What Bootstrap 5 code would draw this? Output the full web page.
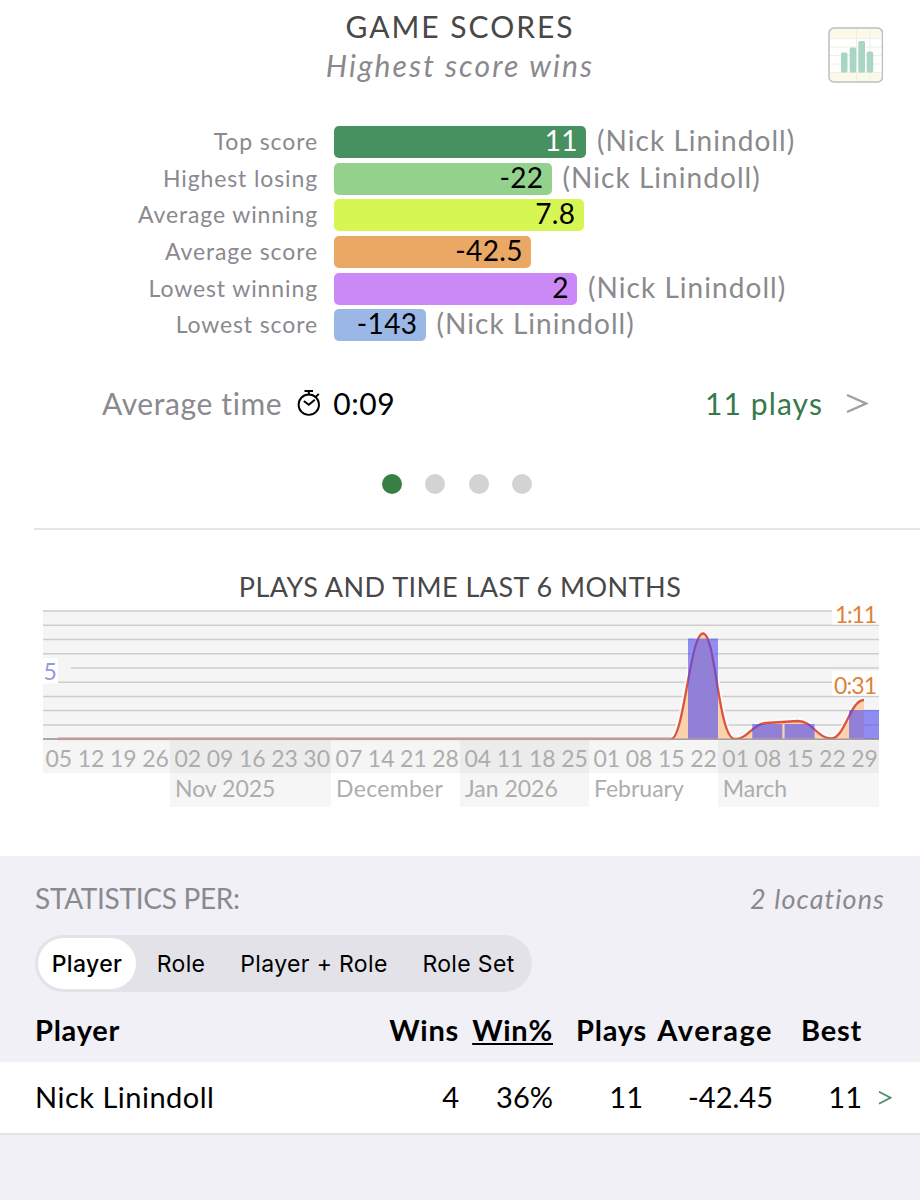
<!DOCTYPE html>
<html lang="en">
<head>
<meta charset="utf-8">
<meta name="viewport" content="width=device-width, initial-scale=1">
<title>Game scores</title>
<link href="https://cdn.jsdelivr.net/npm/bootstrap@5.3.0/dist/css/bootstrap.min.css" rel="stylesheet">
<style>
body{font-family:Lato,"Liberation Sans",sans-serif;background:#f1f0f6;color:#000;font-variant-ligatures:none}
.muted{color:#8a898e}
.head{padding-top:6px}
.t1{font-size:30px;line-height:40px;letter-spacing:2px;color:#484848}
.t2{font-size:30px;line-height:38px;letter-spacing:2.1px;font-style:italic}
.chart-btn{right:37px;top:27px;width:55px;height:56px}
.scores{margin-top:42px;row-gap:4.65px}
.score{height:32px}
.lab{width:318px;margin-right:16px;font-size:23px;letter-spacing:.88px;line-height:31px;height:32px;text-align:right}
.bar{height:32px;border-radius:5px;font-size:28px;letter-spacing:.4px;line-height:29px;text-align:right;padding-right:8px}
.who{font-size:28px;letter-spacing:1.05px;line-height:29px;height:32px;margin-left:11px}
.avg{height:40px;margin-top:42px;padding:0 52px 0 102px;line-height:40px;font-size:30px;letter-spacing:.6px}
.avg>*{flex-shrink:0}
.green{color:#37794a;letter-spacing:1.1px}
.dots{margin:51px 0 34px -6px;gap:23.5px}
.dots i{width:20px;height:20px;border-radius:50%;background:#d3d3d3}
.dots i.on{background:#387f46}
.rule{height:2px;margin-left:34px;background:#e5e5e7}
.t3{margin-top:36px;font-size:27px;letter-spacing:.45px;line-height:41px;height:40px;color:#484848}
.plot{margin:-1px 0 0 43px;width:836px;height:135px;overflow:visible}
.months{margin:0 41px;font-size:23px;color:#adadad;height:67px;clip-path:inset(0 0 0 2px)}
.wk{height:33px;line-height:37px;padding-left:4.500px;background:#f5f5f5}
.mo{height:34px;line-height:30px;padding-left:5px;white-space:nowrap}
.alt .wk{background:#ececec}
.alt .mo{background:#f6f6f6}
.wide{letter-spacing:.3px}
.stats{margin-top:49px;background:#f1f0f6}
.sh{height:79px;padding:0 35px;line-height:85px}
.sh span{font-size:28px;letter-spacing:-.3px}
.sh em{font-size:27px;letter-spacing:1.1px}
.seg{margin-left:35px;width:497px;height:57px;border-radius:29px;background:#e3e2e8;padding:3px;font:400 23px/53px Inter,sans-serif;letter-spacing:.35px}
.seg span{text-align:center;flex-shrink:0}
.seg .on{background:#fff;border-radius:26px;font-weight:500;line-height:52px}
.cols{grid-template-columns:318px 106px 94px 94px 126px 89px 1fr;padding-left:35px;font-size:29px;text-align:right}
.th{height:70px;line-height:75px;font-weight:700;letter-spacing:.75px}
.tr{height:71px;line-height:70px;background:#fff}
.end{height:2px;background:#e3e2e8}
.cols>:first-child{text-align:left}
</style>
</head>
<body>
<main class="bg-white">
<header class="head position-relative text-center">
<div class="t1">GAME SCORES</div>
<div class="t2 muted">Highest score wins</div>
<svg class="chart-btn position-absolute" viewBox="828 27 55 56"><rect x="829" y="28" width="53.5" height="54" rx="5" fill="#fff"/><path d="M830 37V33q0-4.500 4-4.500h44q4 0 4 4.500v5H830zM830 72.500h52V77q0 4.500-4 4.500h-44q-4 0-4-4.500z" fill="#fdf9e9"/><path d="M830 38.500h52M830 47h52M830 55.500h52M830 64h52M830 72.500h52M856.500 29v52M870 29v52" stroke="#efeee9" fill="none"/><g fill="#a9d6c2"><rect x="841" y="52.500" width="6.500" height="20" rx="1.500"/><rect x="849.700" y="47.500" width="6.500" height="25" rx="1.500"/><rect x="858.300" y="41" width="6.700" height="31.500" rx="1.500"/><rect x="866.700" y="51.500" width="6.500" height="21" rx="1.500"/></g><rect x="829" y="28" width="53.500" height="54" rx="5" fill="none" stroke="#bdbdbb" stroke-width="1.500"/></svg>
</header>
<div class="scores d-flex flex-column">
<div class="score d-flex"><div class="lab muted">Top score</div><div class="bar text-white" style="width:252px;background:#47905f">11</div><div class="who muted">(Nick Linindoll)</div></div>
<div class="score d-flex"><div class="lab muted">Highest losing</div><div class="bar" style="width:217.500px;background:#93d18d">-22</div><div class="who muted">(Nick Linindoll)</div></div>
<div class="score d-flex"><div class="lab muted">Average winning</div><div class="bar" style="width:249.500px;background:#d6f753">7.8</div></div>
<div class="score d-flex"><div class="lab muted">Average score</div><div class="bar" style="width:197px;background:#eba865">-42.5</div></div>
<div class="score d-flex"><div class="lab muted">Lowest winning</div><div class="bar" style="width:243px;background:#cb88f7">2</div><div class="who muted">(Nick Linindoll)</div></div>
<div class="score d-flex"><div class="lab muted">Lowest score</div><div class="bar" style="width:91.500px;background:#9ab7e5">-143</div><div class="who muted">(Nick Linindoll)</div></div>
</div>
<div class="avg d-flex align-items-center">
<span class="muted">Average time</span>
<svg width="26" height="30" viewBox="297 388 26 30" style="margin-left:14px" fill="none" stroke="#000" stroke-width="1.900"><circle cx="309.800" cy="404.700" r="10.200"/><path d="M305.500 391h8.500M309.800 391v4M316.800 396.800l3-3M304.800 401l5 3.800 6-5"/></svg>
<span style="margin-left:11px">0:09</span>
<span class="green ms-auto">11 plays</span>
<svg width="22" height="22" viewBox="0 0 22 22" style="margin-left:23px" fill="none" stroke="#a0a0a0" stroke-width="2.400"><path d="M1 3l19 8.500-19 8.500"/></svg>
</div>
<div class="dots d-flex justify-content-center"><i class="on"></i><i></i><i></i><i></i></div>
<div class="rule"></div>
<div class="t3 text-center">PLAYS AND TIME LAST 6 MONTHS</div>
<svg class="plot d-block" viewBox="43 605 836 135" font-family="Lato" font-size="23">
<rect x="43" y="610" width="836" height="130" fill="#f5f5f5"/>
<path d="M43 611H879M43 625.300H879M43 639.500H879M43 653.700H879M71 668H879M43 682.200H879M43 696.400H879M43 710.600H879M43 725H879" stroke="#cdcdcd" stroke-width="1.500"/>
<path d="M43 739H879" stroke="#a9a9a9" stroke-width="2"/>
<path d="M43 658h15v25.500H43zM832 605h47v19.500h-47zM832 671h47v24.500h-47z" fill="#fff"/>
<path d="M671 738C684 738 690 633.500 703 633.500S718 739 735 739C748 739 752 724 766 723Q782 722 798 721C812 721 818 738.500 831 738.500C845 738.500 850 700 864 700" fill="none" stroke="#fff" stroke-opacity=".7" stroke-width="6"/>
<path d="M671 739C684 739 690 633.500 703 633.500S718 739 735 739C748 739 752 724 766 723Q782 722 798 721C812 721 818 738.500 831 738.500C845 738.500 850 700 864 700V739Z" fill="#fad3ae"/>
<path d="M58 739H671C684 739 690 633.500 703 633.500S718 739 735 739C748 739 752 724 766 723Q782 722 798 721C812 721 818 738.500 831 738.500C845 738.500 850 700 864 700" fill="none" stroke="#dc5440" stroke-width="2.300"/>
<path d="M58 739H671" stroke="#b5a0a0" stroke-width="2.500"/>
<path d="M671 739.300H879" stroke="#a39a9a" stroke-width="1.600"/>
<g fill="#4c48f0" fill-opacity=".6"><path d="M688 638.500h30V738.500h-30zM752.300 724h30v14.500h-30zM784.600 724h30v14.500h-30zM849 710h30v28.500h-30z"/></g>
<text x="43.500" y="679.500" fill="#9a97e0">5</text>
<g fill="#e08238"><text x="835" y="622.500" textLength="42">1:11</text><text x="834" y="694" textLength="43">0:31</text></g>
</svg>
<div class="months d-flex">
<div style="flex:4"><div class="d-flex"><span class="wk col">05</span><span class="wk col">12</span><span class="wk col">19</span><span class="wk col">26</span></div><div class="mo"></div></div>
<div class="alt" style="flex:5"><div class="d-flex"><span class="wk col">02</span><span class="wk col">09</span><span class="wk col">16</span><span class="wk col">23</span><span class="wk col">30</span></div><div class="mo">Nov 2025</div></div>
<div style="flex:4"><div class="d-flex"><span class="wk col">07</span><span class="wk col">14</span><span class="wk col">21</span><span class="wk col">28</span></div><div class="mo wide">December</div></div>
<div class="alt" style="flex:4"><div class="d-flex"><span class="wk col">04</span><span class="wk col">11</span><span class="wk col">18</span><span class="wk col">25</span></div><div class="mo">Jan 2026</div></div>
<div style="flex:4"><div class="d-flex"><span class="wk col">01</span><span class="wk col">08</span><span class="wk col">15</span><span class="wk col">22</span></div><div class="mo">February</div></div>
<div class="alt" style="flex:5"><div class="d-flex"><span class="wk col">01</span><span class="wk col">08</span><span class="wk col">15</span><span class="wk col">22</span><span class="wk col">29</span></div><div class="mo">March</div></div>
</div>
<section class="stats">
<div class="sh d-flex justify-content-between muted"><span>STATISTICS PER:</span><em>2 locations</em></div>
<div class="seg d-flex"><span class="on" style="width:98px">Player</span><span style="width:90px">Role</span><span style="width:176px">Player + Role</span><span style="width:127px;padding-left:6px">Role Set</span></div>
<div class="cols th d-grid"><div>Player</div><div>Wins</div><div class="text-decoration-underline">Win%</div><div>Plays</div><div style="letter-spacing:1.500px">Average</div><div>Best</div></div>
<div class="cols tr d-grid"><div style="letter-spacing:.5px">Nick Linindoll</div><div>4</div><div>36%</div><div class="pe-1">11</div><div>-42.45</div><div>11</div><div class="d-flex align-items-center ps-3"><svg width="14" height="14" viewBox="0 0 14 14" fill="none" stroke="#4a8d68" stroke-width="1.700"><path d="M1 .8l11.500 6L1 12.800"/></svg></div></div>
<div class="end"></div>
</section>
</main>
<script src="https://cdn.jsdelivr.net/npm/bootstrap@5.3.0/dist/js/bootstrap.bundle.min.js"></script>
</body>
</html>
